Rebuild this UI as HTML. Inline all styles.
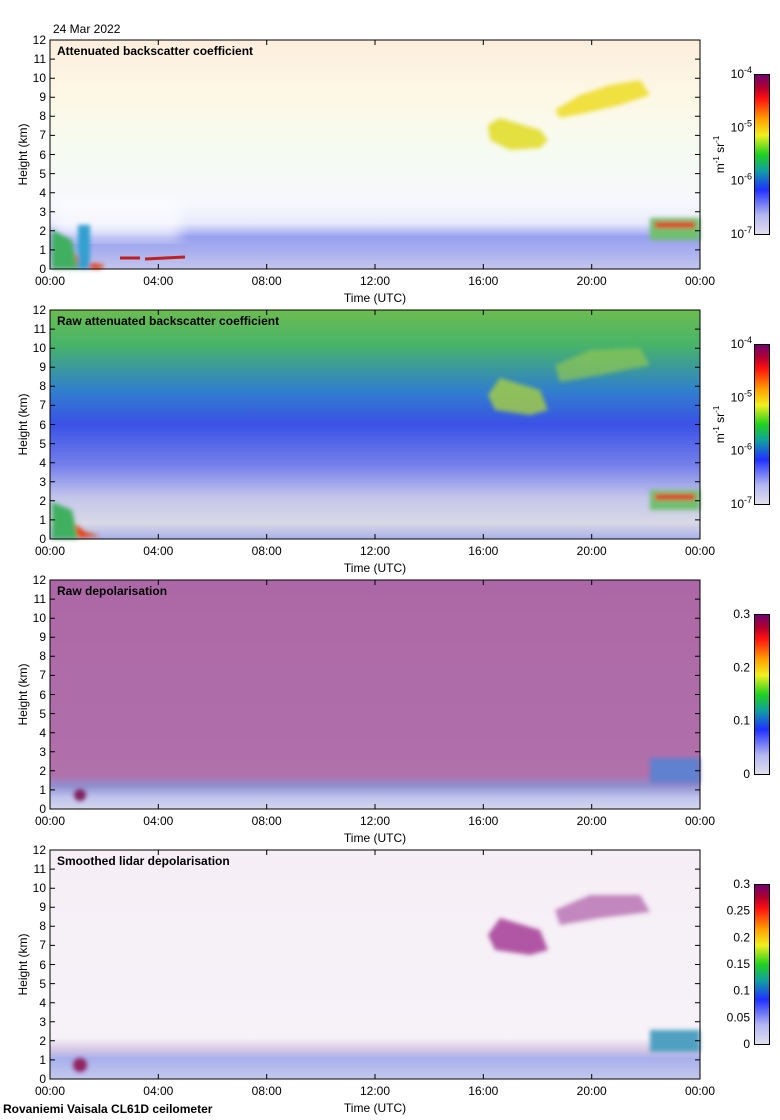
<!DOCTYPE html>
<html><head><meta charset="utf-8"><style>
html,body{margin:0;padding:0;background:#fff;}
svg{display:block;font-family:"Liberation Sans",sans-serif;}
.t{font-size:12px;fill:#000;}
.b{font-size:12px;font-weight:bold;fill:#000;}
</style></head><body>
<svg width="780" height="1120" viewBox="0 0 780 1120" xmlns="http://www.w3.org/2000/svg">
<defs>
<linearGradient id="rb" x1="0" y1="1" x2="0" y2="0">
<stop offset="0" stop-color="#e0e0ec"/><stop offset="0.12" stop-color="#b4b8f0"/><stop offset="0.28" stop-color="#2030ff"/>
<stop offset="0.4" stop-color="#10a0a0"/><stop offset="0.5" stop-color="#20d020"/><stop offset="0.62" stop-color="#f0f020"/>
<stop offset="0.72" stop-color="#ffa000"/><stop offset="0.85" stop-color="#ff1010"/><stop offset="0.92" stop-color="#b00030"/><stop offset="1" stop-color="#700070"/>
</linearGradient>
<linearGradient id="g1" x1="0" y1="0" x2="0" y2="1">
<stop offset="0" stop-color="#fdeedd"/><stop offset="0.25" stop-color="#fdf8e6"/><stop offset="0.5" stop-color="#f5fbf2"/>
<stop offset="0.72" stop-color="#f6f7fd"/><stop offset="0.8" stop-color="#e8eafb"/><stop offset="0.86" stop-color="#98a0ee"/>
<stop offset="0.92" stop-color="#a8aeee"/><stop offset="1" stop-color="#c4c6ec"/>
</linearGradient>
<linearGradient id="g2" x1="0" y1="0" x2="0" y2="1">
<stop offset="0" stop-color="#6cbc50"/><stop offset="0.15" stop-color="#48b468"/><stop offset="0.35" stop-color="#3080cc"/>
<stop offset="0.5" stop-color="#3a52e6"/><stop offset="0.68" stop-color="#7680ea"/><stop offset="0.82" stop-color="#c4c6ea"/>
<stop offset="0.93" stop-color="#d8d8e6"/><stop offset="1" stop-color="#aab0e8"/>
</linearGradient>
<linearGradient id="g3" x1="0" y1="0" x2="0" y2="1">
<stop offset="0" stop-color="#ac68a6"/><stop offset="0.85" stop-color="#b070aa"/><stop offset="0.9" stop-color="#9090d0"/>
<stop offset="0.95" stop-color="#c0c4ec"/><stop offset="1" stop-color="#d4d6ec"/>
</linearGradient>
<linearGradient id="g4" x1="0" y1="0" x2="0" y2="1">
<stop offset="0" stop-color="#f6eef6"/><stop offset="0.82" stop-color="#f6f2f8"/><stop offset="0.87" stop-color="#d8c8e4"/>
<stop offset="0.91" stop-color="#a8b0ec"/><stop offset="1" stop-color="#c4c8ec"/>
</linearGradient>
<filter id="bl"><feGaussianBlur stdDeviation="2"/></filter>
<filter id="bl6"><feGaussianBlur stdDeviation="6"/></filter>
</defs>

<text class="t" x="53" y="33">24 Mar 2022</text>

<!-- PANEL 1 -->
<g transform="translate(0,40)">
<rect x="50" y="0" width="650" height="229" fill="url(#g1)"/>
<rect x="55" y="160" width="125" height="40" fill="#fff" opacity="0.6" filter="url(#bl6)"/>
<g filter="url(#bl)">
<path d="M488 85 L500 78 L540 90 L548 100 L540 108 L510 110 L490 100 Z" fill="#e4e040"/>
<path d="M555 70 L580 55 L610 45 L640 40 L650 55 L620 65 L590 72 L560 78 Z" fill="#f0e040"/>
<rect x="650" y="178" width="50" height="22" fill="#70c070"/>
<rect x="655" y="182" width="40" height="6" fill="#e03020"/>
<path d="M52 200 L70 210 L85 222 L105 225 L100 229 L60 229 L52 220 Z" fill="#e84010"/>
<path d="M52 190 L72 200 L78 229 L52 229 Z" fill="#40b060"/>
<rect x="78" y="185" width="12" height="44" fill="#30a0d0"/>
</g>
<path d="M120 218 L140 218 M145 219 L185 217" stroke="#c02020" stroke-width="3"/>
</g>

<!-- PANEL 2 -->
<g transform="translate(0,310)">
<rect x="50" y="0" width="650" height="229" fill="url(#g2)"/>
<g filter="url(#bl)">
<path d="M488 85 L500 68 L540 80 L548 100 L530 105 L495 100 Z" fill="#a8d040" opacity="0.8"/>
<path d="M555 55 L590 40 L640 38 L650 55 L600 65 L560 72 Z" fill="#90c850" opacity="0.7"/>
<rect x="650" y="180" width="50" height="20" fill="#70c070"/>
<rect x="655" y="184" width="40" height="6" fill="#e03020"/>
<path d="M52 200 L70 210 L85 222 L100 226 L60 229 L52 222 Z" fill="#e84010"/>
<path d="M52 192 L72 200 L78 229 L52 229 Z" fill="#40b060"/>
</g>
</g>

<!-- PANEL 3 -->
<g transform="translate(0,580)">
<rect x="50" y="0" width="650" height="229" fill="url(#g3)"/>
<g filter="url(#bl)">
<rect x="650" y="178" width="50" height="25" fill="#6080d0"/>
<circle cx="80" cy="215" r="6" fill="#802060"/>
</g>
</g>

<!-- PANEL 4 -->
<g transform="translate(0,850)">
<rect x="50" y="0" width="650" height="229" fill="url(#g4)"/>
<g filter="url(#bl)">
<path d="M488 85 L500 68 L540 80 L548 100 L530 105 L495 100 Z" fill="#a03090" opacity="0.8"/>
<path d="M555 60 L590 45 L640 45 L650 62 L600 68 L560 75 Z" fill="#a04098" opacity="0.6"/>
<rect x="650" y="180" width="50" height="22" fill="#50a0c0"/>
<circle cx="80" cy="215" r="7" fill="#902060"/>
</g>
</g>

<!-- Frames, ticks -->
<g>
<g transform="translate(0,40)">
<rect x="50" y="0" width="650" height="229" fill="none" stroke="#000"/>
<path d="M158.3 229v-5M266.7 229v-5M375 229v-5M483.3 229v-5M591.7 229v-5M158.3 0v5M266.7 0v5M375 0v5M483.3 0v5M591.7 0v5M50 209.9h5M50 190.8h5M50 171.75h5M50 152.7h5M50 133.6h5M50 114.5h5M50 95.4h5M50 76.3h5M50 57.25h5M50 38.2h5M50 19.1h5M700 209.9h-5M700 190.8h-5M700 171.75h-5M700 152.7h-5M700 133.6h-5M700 114.5h-5M700 95.4h-5M700 76.3h-5M700 57.25h-5M700 38.2h-5M700 19.1h-5" stroke="#000"/>
</g>
<g transform="translate(0,310)">
<rect x="50" y="0" width="650" height="229" fill="none" stroke="#000"/>
<path d="M158.3 229v-5M266.7 229v-5M375 229v-5M483.3 229v-5M591.7 229v-5M158.3 0v5M266.7 0v5M375 0v5M483.3 0v5M591.7 0v5M50 209.9h5M50 190.8h5M50 171.75h5M50 152.7h5M50 133.6h5M50 114.5h5M50 95.4h5M50 76.3h5M50 57.25h5M50 38.2h5M50 19.1h5M700 209.9h-5M700 190.8h-5M700 171.75h-5M700 152.7h-5M700 133.6h-5M700 114.5h-5M700 95.4h-5M700 76.3h-5M700 57.25h-5M700 38.2h-5M700 19.1h-5" stroke="#000"/>
</g>
<g transform="translate(0,580)">
<rect x="50" y="0" width="650" height="229" fill="none" stroke="#000"/>
<path d="M158.3 229v-5M266.7 229v-5M375 229v-5M483.3 229v-5M591.7 229v-5M158.3 0v5M266.7 0v5M375 0v5M483.3 0v5M591.7 0v5M50 209.9h5M50 190.8h5M50 171.75h5M50 152.7h5M50 133.6h5M50 114.5h5M50 95.4h5M50 76.3h5M50 57.25h5M50 38.2h5M50 19.1h5M700 209.9h-5M700 190.8h-5M700 171.75h-5M700 152.7h-5M700 133.6h-5M700 114.5h-5M700 95.4h-5M700 76.3h-5M700 57.25h-5M700 38.2h-5M700 19.1h-5" stroke="#000"/>
</g>
<g transform="translate(0,850)">
<rect x="50" y="0" width="650" height="229" fill="none" stroke="#000"/>
<path d="M158.3 229v-5M266.7 229v-5M375 229v-5M483.3 229v-5M591.7 229v-5M158.3 0v5M266.7 0v5M375 0v5M483.3 0v5M591.7 0v5M50 209.9h5M50 190.8h5M50 171.75h5M50 152.7h5M50 133.6h5M50 114.5h5M50 95.4h5M50 76.3h5M50 57.25h5M50 38.2h5M50 19.1h5M700 209.9h-5M700 190.8h-5M700 171.75h-5M700 152.7h-5M700 133.6h-5M700 114.5h-5M700 95.4h-5M700 76.3h-5M700 57.25h-5M700 38.2h-5M700 19.1h-5" stroke="#000"/>
</g>
</g>

<g transform="translate(0,40)">
<text class="b" x="57" y="15">Attenuated backscatter coefficient</text>
<g text-anchor="end">
<text class="t" x="46" y="233">0</text><text class="t" x="46" y="214">1</text><text class="t" x="46" y="195">2</text><text class="t" x="46" y="176">3</text><text class="t" x="46" y="157">4</text><text class="t" x="46" y="138">5</text><text class="t" x="46" y="119">6</text><text class="t" x="46" y="99">7</text><text class="t" x="46" y="80">8</text><text class="t" x="46" y="61">9</text><text class="t" x="46" y="42">10</text><text class="t" x="46" y="23">11</text><text class="t" x="46" y="4">12</text>
</g>
<g text-anchor="middle"><text class="t" x="50" y="245">00:00</text><text class="t" x="158.3" y="245">04:00</text><text class="t" x="266.7" y="245">08:00</text><text class="t" x="375" y="245">12:00</text><text class="t" x="483.3" y="245">16:00</text><text class="t" x="591.7" y="245">20:00</text><text class="t" x="700" y="245">00:00</text>
<text class="t" x="375" y="262">Time (UTC)</text>
<text class="t" transform="translate(27,114.5) rotate(-90)">Height (km)</text>
<text class="t" transform="translate(724,114.5) rotate(-90)">m<tspan font-size="8" dy="-5">-1</tspan><tspan dy="5"> sr</tspan><tspan font-size="8" dy="-5">-1</tspan></text></g>
<rect x="754.5" y="34.5" width="15" height="160" fill="url(#rb)" stroke="#000"/>
<g text-anchor="end"><text class="t" x="744" y="38">10</text><text class="t" x="744" y="91.3">10</text><text class="t" x="744" y="144.7">10</text><text class="t" x="744" y="198">10</text></g>
<g font-size="9"><text x="744" y="33">-4</text><text x="744" y="86.3">-5</text><text x="744" y="139.7">-6</text><text x="744" y="193">-7</text></g>
</g>

<g transform="translate(0,310)">
<text class="b" x="57" y="15">Raw attenuated backscatter coefficient</text>
<g text-anchor="end">
<text class="t" x="46" y="233">0</text><text class="t" x="46" y="214">1</text><text class="t" x="46" y="195">2</text><text class="t" x="46" y="176">3</text><text class="t" x="46" y="157">4</text><text class="t" x="46" y="138">5</text><text class="t" x="46" y="119">6</text><text class="t" x="46" y="99">7</text><text class="t" x="46" y="80">8</text><text class="t" x="46" y="61">9</text><text class="t" x="46" y="42">10</text><text class="t" x="46" y="23">11</text><text class="t" x="46" y="4">12</text>
</g>
<g text-anchor="middle"><text class="t" x="50" y="245">00:00</text><text class="t" x="158.3" y="245">04:00</text><text class="t" x="266.7" y="245">08:00</text><text class="t" x="375" y="245">12:00</text><text class="t" x="483.3" y="245">16:00</text><text class="t" x="591.7" y="245">20:00</text><text class="t" x="700" y="245">00:00</text>
<text class="t" x="375" y="262">Time (UTC)</text>
<text class="t" transform="translate(27,114.5) rotate(-90)">Height (km)</text>
<text class="t" transform="translate(724,114.5) rotate(-90)">m<tspan font-size="8" dy="-5">-1</tspan><tspan dy="5"> sr</tspan><tspan font-size="8" dy="-5">-1</tspan></text></g>
<rect x="754.5" y="34.5" width="15" height="160" fill="url(#rb)" stroke="#000"/>
<g text-anchor="end"><text class="t" x="744" y="38">10</text><text class="t" x="744" y="91.3">10</text><text class="t" x="744" y="144.7">10</text><text class="t" x="744" y="198">10</text></g>
<g font-size="9"><text x="744" y="33">-4</text><text x="744" y="86.3">-5</text><text x="744" y="139.7">-6</text><text x="744" y="193">-7</text></g>
</g>

<g transform="translate(0,580)">
<text class="b" x="57" y="15">Raw depolarisation</text>
<g text-anchor="end">
<text class="t" x="46" y="233">0</text><text class="t" x="46" y="214">1</text><text class="t" x="46" y="195">2</text><text class="t" x="46" y="176">3</text><text class="t" x="46" y="157">4</text><text class="t" x="46" y="138">5</text><text class="t" x="46" y="119">6</text><text class="t" x="46" y="99">7</text><text class="t" x="46" y="80">8</text><text class="t" x="46" y="61">9</text><text class="t" x="46" y="42">10</text><text class="t" x="46" y="23">11</text><text class="t" x="46" y="4">12</text>
</g>
<g text-anchor="middle"><text class="t" x="50" y="245">00:00</text><text class="t" x="158.3" y="245">04:00</text><text class="t" x="266.7" y="245">08:00</text><text class="t" x="375" y="245">12:00</text><text class="t" x="483.3" y="245">16:00</text><text class="t" x="591.7" y="245">20:00</text><text class="t" x="700" y="245">00:00</text>
<text class="t" x="375" y="262">Time (UTC)</text>
<text class="t" transform="translate(27,114.5) rotate(-90)">Height (km)</text></g>
<rect x="754.5" y="34.5" width="15" height="160" fill="url(#rb)" stroke="#000"/>
<g text-anchor="end"><text class="t" x="750" y="38">0.3</text><text class="t" x="750" y="91.3">0.2</text><text class="t" x="750" y="144.7">0.1</text><text class="t" x="750" y="198">0</text></g>
</g>

<g transform="translate(0,850)">
<text class="b" x="57" y="15">Smoothed lidar depolarisation</text>
<g text-anchor="end">
<text class="t" x="46" y="233">0</text><text class="t" x="46" y="214">1</text><text class="t" x="46" y="195">2</text><text class="t" x="46" y="176">3</text><text class="t" x="46" y="157">4</text><text class="t" x="46" y="138">5</text><text class="t" x="46" y="119">6</text><text class="t" x="46" y="99">7</text><text class="t" x="46" y="80">8</text><text class="t" x="46" y="61">9</text><text class="t" x="46" y="42">10</text><text class="t" x="46" y="23">11</text><text class="t" x="46" y="4">12</text>
</g>
<g text-anchor="middle"><text class="t" x="50" y="245">00:00</text><text class="t" x="158.3" y="245">04:00</text><text class="t" x="266.7" y="245">08:00</text><text class="t" x="375" y="245">12:00</text><text class="t" x="483.3" y="245">16:00</text><text class="t" x="591.7" y="245">20:00</text><text class="t" x="700" y="245">00:00</text>
<text class="t" x="375" y="262">Time (UTC)</text>
<text class="t" transform="translate(27,114.5) rotate(-90)">Height (km)</text></g>
<rect x="754.5" y="34.5" width="15" height="160" fill="url(#rb)" stroke="#000"/>
<g text-anchor="end"><text class="t" x="750" y="38">0.3</text><text class="t" x="750" y="64.7">0.25</text><text class="t" x="750" y="91.3">0.2</text><text class="t" x="750" y="118">0.15</text><text class="t" x="750" y="144.7">0.1</text><text class="t" x="750" y="171.3">0.05</text><text class="t" x="750" y="198">0</text></g>
</g>

<text class="b" x="3" y="1113">Rovaniemi Vaisala CL61D ceilometer</text>
</svg>
</body></html>
